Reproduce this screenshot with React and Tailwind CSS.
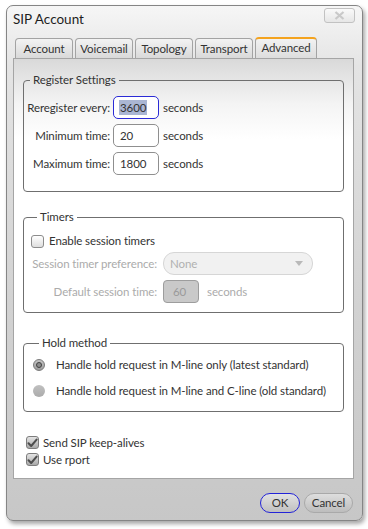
import React from "react";

const font = { fontFamily: 'Lato, "Open Sans", sans-serif' };
const txt = "text-[11.5px] tracking-[-0.1px]";

function Check({ checked }) {
  return (
    <span
      className={
        "w-[13px] h-[13px] rounded-[3px] border flex items-center justify-center shrink-0 " +
        (checked
          ? "border-[#7d7d7d] bg-[linear-gradient(to_bottom,#e4e4e4,#a9a9a9)]"
          : "border-[#8c8c8c] bg-[linear-gradient(to_bottom,#ffffff,#dedede)]")
      }
    >
      {checked && (
        <svg width="11" height="10" viewBox="0 0 11 10">
          <path d="M1.5 5.2 L4.2 8 L9.6 1.6" fill="none" stroke="#4d4d4d" strokeWidth="2" strokeLinecap="round" strokeLinejoin="round" />
        </svg>
      )}
    </span>
  );
}

function Radio({ checked }) {
  return (
    <span
      className={
        "w-[12px] h-[12px] rounded-full shrink-0 flex items-center justify-center " +
        (checked
          ? "border border-[#7a7a7a] bg-[linear-gradient(to_bottom,#c4c4c4,#9c9c9c)]"
          : "bg-[linear-gradient(to_bottom,#c0c0c0,#ababab)]")
      }
    >
      {checked && <span className="w-[6px] h-[6px] rounded-full border border-[#404040] bg-[#8c8c8c]" />}
    </span>
  );
}

function Group({ title, className, children }) {
  return (
    <fieldset className={"border border-[#6f6f6f] rounded-[4px] ml-[9px] w-[321px] " + className}>
      <legend className={"ml-[6px] px-[3px] leading-[16px] text-[#333] whitespace-nowrap " + txt}>{title}</legend>
      {children}
    </fieldset>
  );
}

function Row({ label, value, focused }) {
  return (
    <div className={"flex items-center h-[23px] " + txt}>
      <span className="w-[89px] text-right pr-[3px] text-[#333] whitespace-nowrap">{label}</span>
      <span
        className={
          "w-[46px] h-[23px] rounded-[5px] bg-white flex items-center pl-[6px] text-[#333] border " +
          (focused ? "border-[#2b2bd6]" : "border-[#8f8f8f]")
        }
      >
        {focused ? <span className="bg-[#aab6d3] px-[1px] -ml-[1px] leading-[15px]">{value}</span> : value}
      </span>
      <span className="ml-[4px] text-[#333]">seconds</span>
    </div>
  );
}

const tabs = ["Account", "Voicemail", "Topology", "Transport"];

export default function App() {
  return (
    <div className="w-[368px] h-[529px] bg-white pt-[5px] pl-[6px]" style={font}>
      <div className="w-[357px] h-[516px] rounded-[7px] border border-[#858585] shadow-[2px_3px_4px_rgba(0,0,0,0.35)] bg-[linear-gradient(to_bottom,#f6f6f6_0px,#e4e4e4_60px,#d2d2d2_300px,#c7c7c7_516px)] flex flex-col">
        {/* title bar */}
        <div className="h-[31px] flex items-start justify-between">
          <span className="ml-[6px] mt-[3px] text-[13.5px] leading-[20px] text-[#1e1e1e]">SIP Account</span>
          <span className="mt-[2px] mr-[7px] w-[31px] h-[15px] rounded-[3px] border border-[#c2c2c2] bg-[linear-gradient(to_bottom,#fafafa,#e6e6e6)] flex items-center justify-center">
            <svg width="11" height="9" viewBox="0 0 11 9">
              <path d="M1.5 1 L9.5 8 M9.5 1 L1.5 8" stroke="#c9c9c9" strokeWidth="2.2" />
            </svg>
          </span>
        </div>

        {/* tabs */}
        <div className={"h-[21px] flex items-end ml-[8px] gap-[2px] " + txt}>
          {tabs.map((t) => (
            <div
              key={t}
              className="w-[58px] h-[20px] rounded-t-[4px] border border-b-0 border-[#a3a3a3] bg-[linear-gradient(to_bottom,#f3f3f3,#d9d9d9)] flex items-center justify-center text-[#333]"
            >
              {t}
            </div>
          ))}
          <div className="w-[62px] h-[22px] rounded-t-[4px] border-x border-[#a3a3a3] border-t-2 border-t-[#f4a31e] bg-[linear-gradient(to_bottom,#f2f2f2,#dcdcdc)] flex items-center justify-center text-[#333] -mb-[1px] pb-[2px]">
            Advanced
          </div>
        </div>

        {/* panel */}
        <div className="ml-[6px] w-[341px] h-[421px] border border-[#a5a5a5] bg-[linear-gradient(to_bottom,#d9d9d9_0px,#f4f4f4_45px,#ffffff_80px)] flex flex-col">
          <Group title="Register Settings" className="mt-[13px] h-[120px] pt-[8px] flex flex-col gap-[5px]">
            <Row label="Reregister every:" value="3600" focused />
            <Row label="Minimum time:" value="20" />
            <Row label="Maximum time:" value="1800" />
          </Group>

          <Group title="Timers" className={"mt-[17px] h-[104px] pt-[9px] pl-[7px] flex flex-col " + txt}>
            <div className="flex items-center gap-[5px] h-[14px]">
              <Check checked={false} />
              <span className="text-[#333]">Enable session timers</span>
            </div>
            <div className="flex items-center mt-[4px] -ml-[7px] h-[23px]">
              <span className="w-[139px] text-right pr-[6px] text-[#ababab] whitespace-nowrap">Session timer preference:</span>
              <span className="w-[150px] h-[23px] rounded-[11px] border border-[#d6d6d6] bg-[#f1f1f1] flex items-center justify-between pl-[6px] pr-[9px] text-[#b0b0b0]">
                None
                <svg width="8" height="5" viewBox="0 0 8 5">
                  <path d="M0 0 H8 L4 5 Z" fill="#b9b9b9" />
                </svg>
              </span>
            </div>
            <div className="flex items-center mt-[5px] -ml-[7px] h-[23px]">
              <span className="w-[139px] text-right pr-[6px] text-[#ababab] whitespace-nowrap">Default session time:</span>
              <span className="w-[36px] h-[23px] rounded-[4px] border border-[#9d9d9d] bg-[#c9c9c9] flex items-center pl-[9px] text-[#9a9a9a]">60</span>
              <span className="ml-[8px] text-[#ababab]">seconds</span>
            </div>
          </Group>

          <Group title="Hold method" className={"mt-[22px] h-[77px] pt-[6px] pl-[9px] flex flex-col gap-[10px] " + txt}>
            <div className="flex items-center gap-[11px] h-[16px]">
              <Radio checked />
              <span className="text-[#333] whitespace-nowrap">Handle hold request in M-line only (latest standard)</span>
            </div>
            <div className="flex items-center gap-[11px] h-[16px]">
              <Radio checked={false} />
              <span className="text-[#333] whitespace-nowrap">Handle hold request in M-line and C-line (old standard)</span>
            </div>
          </Group>

          <div className={"mt-[24px] ml-[12px] flex flex-col gap-[4px] " + txt}>
            <div className="flex items-center gap-[4px] h-[13px]">
              <Check checked />
              <span className="text-[#333]">Send SIP keep-alives</span>
            </div>
            <div className="flex items-center gap-[4px] h-[13px]">
              <Check checked />
              <span className="text-[#333]">Use rport</span>
            </div>
          </div>
        </div>

        {/* buttons */}
        <div className={"flex justify-end gap-[4px] mr-[9px] mt-[14px] " + txt}>
          <span className="w-[40px] h-[20px] rounded-[10px] border border-[#2323d8] bg-[linear-gradient(to_bottom,#e2e2e2,#c0c0c0)] flex items-center justify-center text-[#333]">
            OK
          </span>
          <span className="w-[49px] h-[20px] rounded-[10px] border border-[#a9a9a9] bg-[linear-gradient(to_bottom,#dedede,#bdbdbd)] flex items-center justify-center text-[#333]">
            Cancel
          </span>
        </div>
      </div>
    </div>
  );
}
